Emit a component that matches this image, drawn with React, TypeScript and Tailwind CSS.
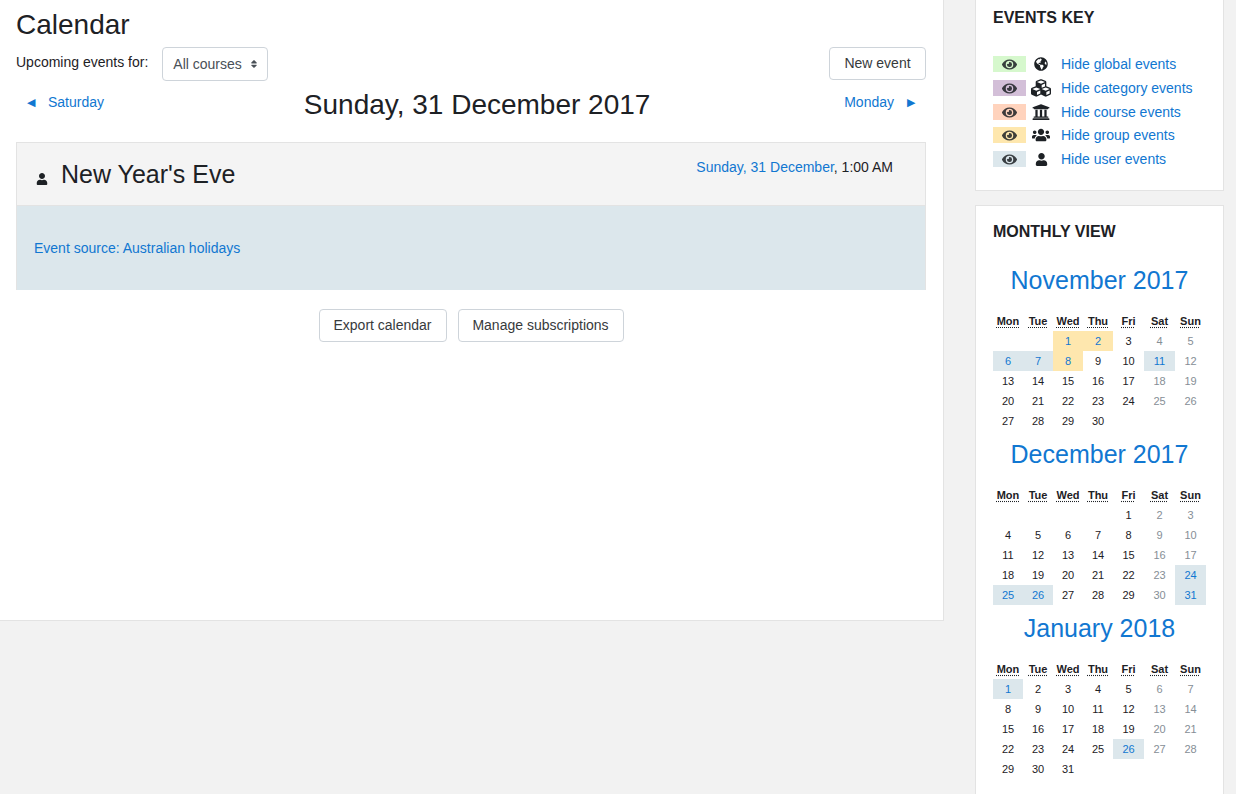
import { FaEye, FaGlobeAmericas, FaCubes, FaUniversity, FaUsers, FaUser, FaSort } from "react-icons/fa";

const LINK = "text-[#1177d1]";
const KEY = [
  { bg: "bg-[#d6f8cd]", label: "Hide global events", Icon: FaGlobeAmericas, size: "text-[14px]", mt: "mb-[8px]" },
  { bg: "bg-[#d3bfd8]", label: "Hide category events", Icon: FaCubes, size: "text-[20px]", mt: "mb-[8px]" },
  { bg: "bg-[#ffd3bd]", label: "Hide course events", Icon: FaUniversity, size: "text-[18px]", mt: "mb-[7px]" },
  { bg: "bg-[#fee7ae]", label: "Hide group events", Icon: FaUsers, size: "text-[18px]", mt: "mb-[8px]" },
  { bg: "bg-[#dce7ec]", label: "Hide user events", Icon: FaUser, size: "text-[13px]", mt: "" },
];

const DAYS = ["Mon", "Tue", "Wed", "Thu", "Fri", "Sat", "Sun"];

type Month = { title: string; offset: number; count: number; group: number[]; user: number[] };
const MONTHS: Month[] = [
  { title: "November 2017", offset: 2, count: 30, group: [1, 2, 8], user: [6, 7, 11] },
  { title: "December 2017", offset: 4, count: 31, group: [], user: [24, 25, 26, 31] },
  { title: "January 2018", offset: 0, count: 31, group: [], user: [1, 26] },
];

function MonthView({ m }: { m: Month }) {
  const cells: (number | null)[] = [];
  for (let i = 0; i < m.offset; i++) cells.push(null);
  for (let d = 1; d <= m.count; d++) cells.push(d);
  return (
    <div>
      <div className={`pt-[8px] pb-[16px] text-center text-[25px] leading-[30px] ${LINK}`}>{m.title}</div>
      <div className="grid grid-cols-[30px_30px_30px_30px_31px_31px_31px] text-center text-[11px] leading-[20px]">
        {DAYS.map((d) => (
          <div key={d} className="h-[20px] font-bold">
            <span className="underline decoration-dotted underline-offset-2">{d}</span>
          </div>
        ))}
        {cells.map((d, i) => {
          if (d === null) return <div key={i} className="h-[20px]" />;
          const wk = i % 7 >= 5;
          const g = m.group.includes(d);
          const u = m.user.includes(d);
          const cls = g
            ? `bg-[#fee7ae] ${LINK}`
            : u
              ? `bg-[#dce7ec] ${LINK}`
              : wk
                ? "text-[#868e96]"
                : "";
          return (
            <div key={i} className={`h-[20px] ${cls}`}>
              {d}
            </div>
          );
        })}
      </div>
    </div>
  );
}

export default function App() {
  return (
    <div className="flex h-[794px] w-[1236px] items-start overflow-hidden bg-[#f2f2f2] text-[#1d2125] [font-family:'Liberation_Sans',Arial,sans-serif] text-[14px]">
      <main className="h-[621px] w-[944px] shrink-0 border-r border-b border-[#e3e3e3] bg-white pl-[16px] pr-[17px]">
        <h2 className="pt-[7px] text-[28px] leading-[36px]">Calendar</h2>
        <div className="mt-[4px] flex items-start justify-between">
          <div className="flex items-start">
            <span className="mt-[5px] leading-[20px]">Upcoming events for:</span>
            <div className="ml-[14px] flex h-[34px] w-[106px] items-center rounded border border-[#ced4da] pl-[10px] text-[#495057]">
              All courses
              <FaSort className="ml-[7px] text-[10px]" />
            </div>
          </div>
          <button className="h-[33px] w-[97px] rounded border border-[#ced4da] text-[#373a3c]">New event</button>
        </div>
        <div className="mt-[6px] flex items-start justify-between px-[11px]">
          <a className={`mt-[5px] flex items-center leading-[20px] ${LINK}`}>
            <span className="mr-[13px] text-[11px]">◀</span>Saturday
          </a>
          <h2 className="text-[28px] leading-[36px] ml-[6px]">Sunday, 31 December 2017</h2>
          <a className={`mt-[5px] flex items-center leading-[20px] ${LINK}`}>
            Monday<span className="ml-[13px] text-[11px]">▶</span>
          </a>
        </div>
        <section className="mt-[19px] h-[148px] border border-[#e3e3e3]">
          <div className="flex h-[63px] items-center justify-between border-b border-[#e3e3e3] bg-[#f4f4f4] pr-[32px] pl-[19px]">
            <div className="flex items-center">
              <FaUser className="mt-[9px] mr-[13px] text-[12px]" />
              <span className="text-[25px] leading-[30px]">New Year's Eve</span>
            </div>
            <div className="mb-[14px]">
              <span className={LINK}>Sunday, 31 December</span>, 1:00 AM
            </div>
          </div>
          <div className={`flex h-[84px] items-center bg-[#dce7ec] pl-[17px] ${LINK}`}>Event source: Australian holidays</div>
        </section>
        <div className="mt-[19px] flex justify-center gap-[11px] text-[#373a3c]">
          <button className="h-[33px] w-[128px] rounded border border-[#ced4da]">Export calendar</button>
          <button className="h-[33px] w-[166px] rounded border border-[#ced4da]">Manage subscriptions</button>
        </div>
      </main>

      <aside className="ml-[31px] flex w-[249px] shrink-0 flex-col gap-[14px]">
        <section className="h-[191px] border-r border-b border-l border-[#e3e3e3] bg-white pl-[17px] pr-[17px]">
          <h5 className="pt-[8px] text-[16px] leading-[19px] font-bold">EVENTS KEY</h5>
          <div className="mt-[29px]">
            {KEY.map(({ bg, label, Icon, size, mt }) => (
              <div key={label} className={`flex h-[16px] items-center ${mt}`}>
                <div className={`flex h-[16px] w-[33px] items-center justify-center ${bg}`}>
                  <FaEye className="text-[15px] opacity-85" />
                </div>
                <div className={`flex w-[30px] items-center justify-center ${size}`}>
                  <Icon />
                </div>
                <a className={`ml-[5px] whitespace-nowrap ${LINK}`}>{label}</a>
              </div>
            ))}
          </div>
        </section>
        <section className="border border-[#e3e3e3] bg-white pl-[17px] pr-[17px] pb-[40px]">
          <h5 className="pt-[16px] pb-[16px] text-[16px] leading-[19px] font-bold">MONTHLY VIEW</h5>
          {MONTHS.map((m) => (
            <MonthView key={m.title} m={m} />
          ))}
        </section>
      </aside>
    </div>
  );
}
